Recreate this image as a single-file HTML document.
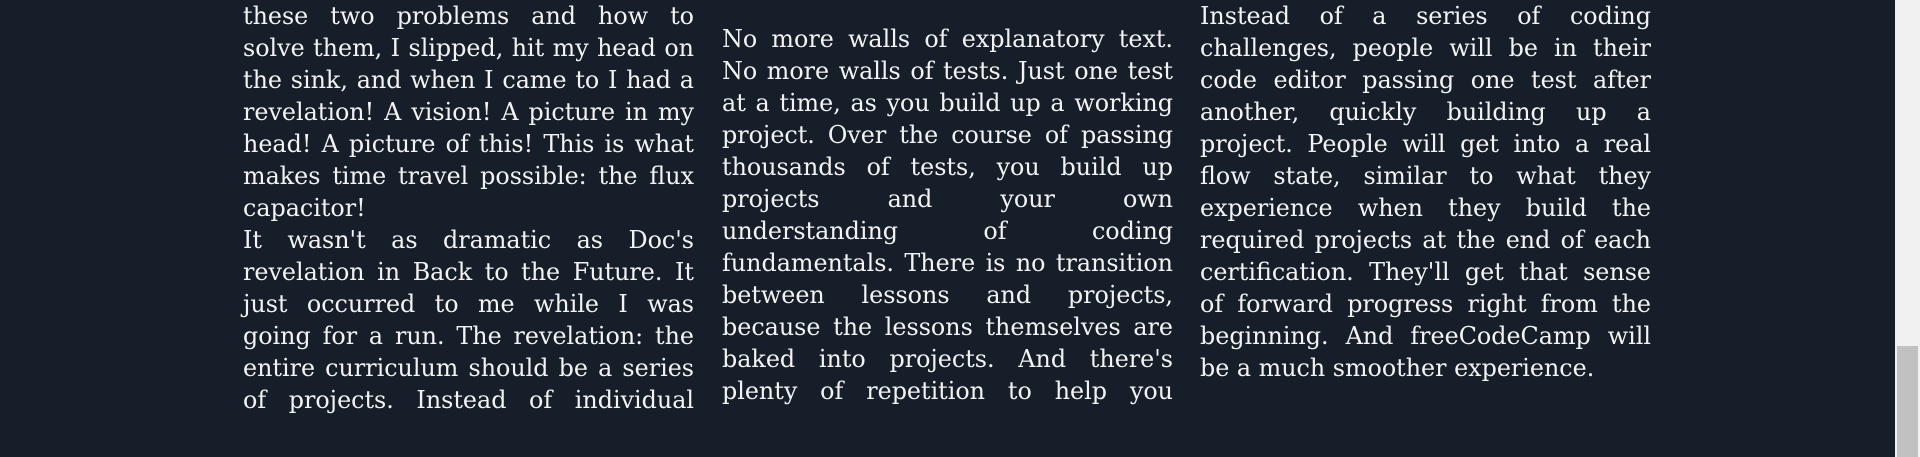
<!DOCTYPE html>
<html><head><meta charset="utf-8"><style>
html,body{margin:0;padding:0;width:1920px;height:457px;overflow:hidden;background:#151e29;}
.col{position:absolute;width:451px;font-family:"DejaVu Serif","Liberation Serif",serif;font-size:23.8px;color:#f3f3f3;}
.col div{height:32px;line-height:33px;white-space:nowrap;text-align:justify;text-align-last:justify;}
.col div.e{text-align-last:left;}
#sb{position:absolute;left:1895px;top:0;width:25px;height:457px;background:#f1f1f1;}
#th{position:absolute;left:1897px;top:346px;width:21px;height:111px;background:#c1c1c1;}
</style></head><body>
<div class="col" style="left:243px;top:0">
<div>these two problems and how to</div>
<div>solve them, I slipped, hit my head on</div>
<div>the sink, and when I came to I had a</div>
<div>revelation! A vision! A picture in my</div>
<div>head! A picture of this! This is what</div>
<div>makes time travel possible: the flux</div>
<div class="e">capacitor!</div>
<div>It wasn't as dramatic as Doc's</div>
<div>revelation in Back to the Future. It</div>
<div>just occurred to me while I was</div>
<div>going for a run. The revelation: the</div>
<div>entire curriculum should be a series</div>
<div>of projects. Instead of individual</div>
</div>
<div class="col" style="left:722px;top:23px">
<div>No more walls of explanatory text.</div>
<div>No more walls of tests. Just one test</div>
<div>at a time, as you build up a working</div>
<div>project. Over the course of passing</div>
<div>thousands of tests, you build up</div>
<div>projects and your own</div>
<div>understanding of coding</div>
<div>fundamentals. There is no transition</div>
<div>between lessons and projects,</div>
<div>because the lessons themselves are</div>
<div>baked into projects. And there's</div>
<div>plenty of repetition to help you</div>
</div>
<div class="col" style="left:1200px;top:0">
<div>Instead of a series of coding</div>
<div>challenges, people will be in their</div>
<div>code editor passing one test after</div>
<div>another, quickly building up a</div>
<div>project. People will get into a real</div>
<div>flow state, similar to what they</div>
<div>experience when they build the</div>
<div>required projects at the end of each</div>
<div>certification. They'll get that sense</div>
<div>of forward progress right from the</div>
<div>beginning. And freeCodeCamp will</div>
<div class="e">be a much smoother experience.</div>
</div>
<div id="sb"></div><div id="th"></div>
</body></html>
